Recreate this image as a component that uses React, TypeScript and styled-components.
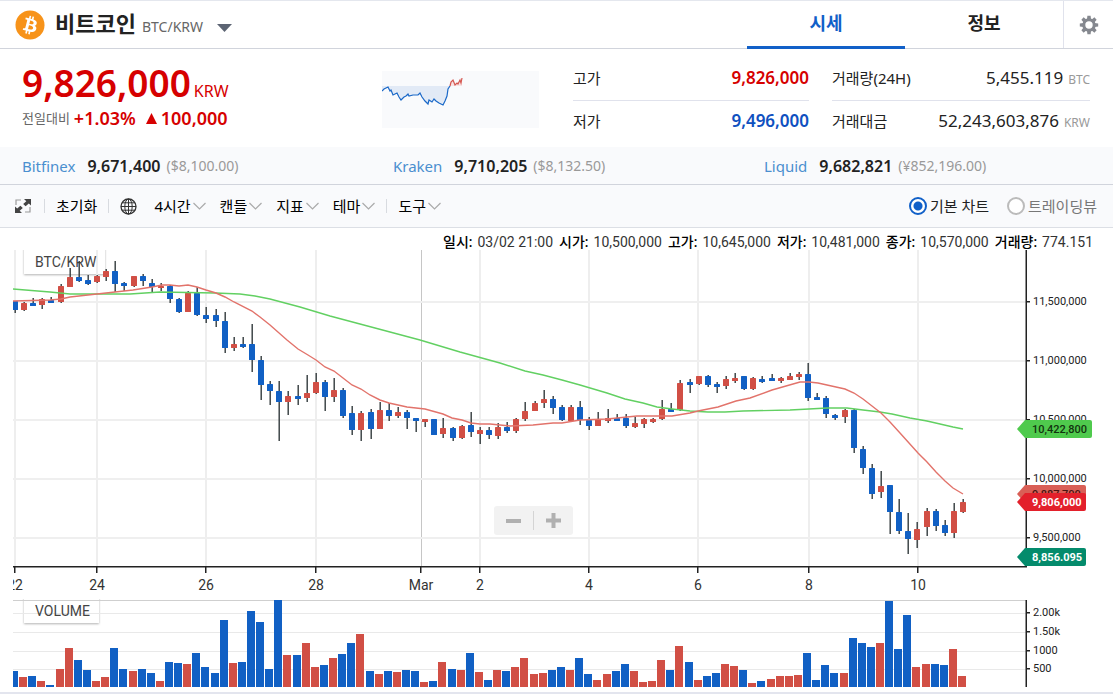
import React, { useState } from 'react';
import styled, { createGlobalStyle } from 'styled-components';

const SANS = `"Noto Sans", "Noto Sans CJK KR", sans-serif`;
const CHART_FONT = `Roboto, "Noto Sans CJK KR", sans-serif`;

const color = {
  blue: '#1160c8',
  up: '#d60000',
  down: '#0f50c0',
  candleUp: '#d14f45',
  candleDown: '#1160c4',
  line: '#d1d4dc',
  soft: '#e0e2ec',
  panel: '#f9fafc',
  text: '#222222',
  muted: '#999999',
};

const GlobalStyle = createGlobalStyle`
  *, *::before, *::after { box-sizing: border-box; }
  body { margin: 0; background: #ffffff; color: ${color.text}; font-family: ${SANS}; }
  button { font: inherit; color: inherit; background: none; border: 0; padding: 0; margin: 0; cursor: pointer; }
  dl, dt, dd, h1, p { margin: 0; }
  svg { display: block; flex: none; }
`;

const Page = styled.div`
  border-top: 1px solid #e4e7ee;
  border-bottom: 2px solid #e3e5ee;
`;

/* ---------- header ---------- */

const Header = styled.header`
  display: flex;
  height: 48px;
  border-bottom: 1px solid ${color.line};
`;

const CoinPicker = styled.div`
  flex: 1;
  display: flex;
  align-items: center;
  padding-left: 15px;
`;

const CoinName = styled.h1`
  margin-left: 10px;
  font-size: 22px;
  line-height: 32px;
  font-weight: 700;
  white-space: nowrap;
  display: flex;
  align-items: baseline;
  gap: 6px;
`;

const PairCode = styled.span`
  font-size: 14px;
  font-weight: 400;
  color: #666666;
`;

const PickerButton = styled.button`
  margin: 6px 0 0 14px;
`;

const Tab = styled.button<{ $active?: boolean }>`
  width: 158px;
  height: 48px;
  padding-bottom: 1px;
  font-size: 18px;
  line-height: 27px;
  font-weight: 700;
  color: ${(p) => (p.$active ? color.blue : color.text)};
  border-bottom: 3px solid ${(p) => (p.$active ? color.blue : 'transparent')};
`;

const Tabs = styled.nav`
  display: flex;
`;

const SettingsButton = styled.button`
  width: 50px;
  display: flex;
  align-items: center;
  justify-content: center;
  border-left: 1px solid ${color.soft};
`;

/* ---------- summary ---------- */

const Summary = styled.section`
  display: flex;
  height: 98px;
  padding: 0 23px 0 22px;
`;

const PriceBlock = styled.div`
  flex: 1;
  padding-top: 12px;
  white-space: nowrap;
`;

const Price = styled.p`
  display: flex;
  align-items: baseline;
  height: 44px;
  font-size: 37px;
  line-height: 44px;
  font-weight: 600;
  color: ${color.up};
`;

const PriceUnit = styled.span`
  margin-left: 3px;
  font-size: 16px;
  line-height: 24px;
  font-weight: 400;
`;

const Change = styled.p`
  display: flex;
  align-items: center;
  font-size: 18px;
  line-height: 26px;
  font-weight: 600;
  color: ${color.up};
`;

const ChangeLabel = styled.span`
  margin-right: 4px;
  font-size: 13px;
  font-weight: 400;
  color: #666666;
`;

const ChangeAmount = styled.span`
  display: flex;
  align-items: center;
  gap: 4px;
  margin-left: 10px;
`;

const SparkBox = styled.div`
  width: 157px;
  height: 57px;
  margin-top: 22px;
  background: ${color.panel};
`;

const StatList = styled.dl<{ $width: number; $gap: number }>`
  width: ${(p) => p.$width}px;
  margin-left: ${(p) => p.$gap}px;
  padding-top: 9px;
`;

const StatRow = styled.div`
  display: flex;
  align-items: center;
  justify-content: space-between;
  height: 42px;
  padding-bottom: 2px;
  white-space: nowrap;

  & + & { border-top: 1px solid ${color.soft}; }
`;

const StatLabel = styled.dt`
  font-size: 15px;
  line-height: 22px;
`;

const StatValue = styled.dd<{ $tone?: string }>`
  font-size: 17px;
  line-height: 22px;
  font-weight: ${(p) => (p.$tone ? 600 : 400)};
  color: ${(p) => p.$tone ?? color.text};
`;

const StatUnit = styled.span`
  margin-left: 5px;
  font-size: 12px;
  line-height: 12px;
  color: ${color.muted};
`;

/* ---------- other exchanges ---------- */

const Exchanges = styled.section`
  display: grid;
  grid-template-columns: repeat(3, 1fr);
  height: 38px;
  background: ${color.panel};
  border-bottom: 1px solid ${color.line};
`;

const Exchange = styled.div`
  display: flex;
  align-items: center;
  padding-left: 22px;
  white-space: nowrap;
  font-size: 15px;
  line-height: 22px;
`;

const ExchangeName = styled.a`
  color: #4a8fcf;
  text-decoration: none;
`;

const ExchangePrice = styled.strong`
  margin-left: 12px;
  font-size: 16px;
  font-weight: 600;
`;

const ExchangeLocal = styled.span`
  margin-left: 6px;
  font-size: 14px;
  color: ${color.muted};
`;

/* ---------- chart toolbar ---------- */

const Toolbar = styled.div`
  display: flex;
  align-items: center;
  height: 43px;
  padding: 0 16px 0 15px;
  background: ${color.panel};
  border-bottom: 1px solid #dcdfe5;
  font-size: 15px;
  line-height: 22px;
  color: #000000;
`;

const ToolGroup = styled.div`
  display: flex;
  align-items: center;
  gap: 12px;
  padding-right: 11px;

  &:first-child { padding-right: 13px; }
  & + & { padding-left: 12px; position: relative; }
  & + &::before {
    content: '';
    position: absolute;
    left: 0;
    top: 4px;
    bottom: 4px;
    width: 1px;
    background: #d8dbe0;
  }
`;

const ToolButton = styled.button`
  display: flex;
  align-items: center;
  gap: 2px;
  min-height: 22px;
  white-space: nowrap;
`;

const MenuRow = styled.div`
  display: flex;
  gap: 14px;
  margin-left: 5px;
`;

const ChartChoice = styled.fieldset`
  display: flex;
  gap: 18px;
  margin: 0 0 0 auto;
  padding: 0;
  border: 0;
`;

const ChoiceLabel = styled.label<{ $on: boolean }>`
  display: flex;
  align-items: center;
  gap: 3px;
  white-space: nowrap;
  color: ${(p) => (p.$on ? color.text : '#777777')};
`;

const Radio = styled.input`
  appearance: none;
  width: 18px;
  height: 18px;
  margin: 0;
  border: 2px solid #bbbbbb;
  border-radius: 50%;
  background: #ffffff;

  &:checked {
    border-color: ${color.blue};
    background: radial-gradient(circle, ${color.blue} 0 4px, #ffffff 5px);
  }
`;

/* ---------- chart ---------- */

const Readout = styled.dl`
  display: flex;
  justify-content: flex-end;
  gap: 6px;
  height: 22px;
  padding: 4px 20px 0 0;
  font-family: ${CHART_FONT};
  font-size: 14px;
  line-height: 20px;
  white-space: nowrap;
`;

const ReadoutItem = styled.div`
  display: flex;
  gap: 5px;
  dt { font-weight: 500; color: #000000; }
  dd { color: #333333; }
`;

const ChartArea = styled.div`
  position: relative;
  svg.plot { width: 100%; height: auto; font-family: ${CHART_FONT}; }
`;

const ZoomControl = styled.div`
  position: absolute;
  left: 494px;
  top: 256px;
  display: flex;
  align-items: center;
  width: 79px;
  height: 29px;
  background: #f2f2f2;
  border-radius: 3px;
`;

const ZoomButton = styled.button`
  flex: 1;
  height: 19px;
  display: flex;
  align-items: center;
  justify-content: center;
  & + & { border-left: 1px solid #d4d4d4; }
`;

/* [direction, high, body top, body bottom, low, volume] in plot units */
type Candle = ['U' | 'D', number, number, number, number, number];

const candles: Candle[] = [
  ['D', 301, 301, 310, 313, 16], ['U', 302, 303, 310, 311, 10], ['D', 298, 303, 306, 306, 11], ['U', 298, 299, 305, 309, 6],
  ['D', 297, 300, 303, 303, 2], ['U', 284, 286, 302, 303, 18], ['U', 268, 277, 287, 287, 39], ['D', 261, 277, 281, 282, 27],
  ['D', 275, 280, 284, 285, 17], ['U', 275, 276, 282, 283, 6], ['U', 269, 271, 277, 281, 10], ['D', 261, 271, 284, 292, 39],
  ['D', 282, 283, 286, 291, 18], ['U', 276, 276, 286, 287, 16], ['D', 274, 276, 281, 286, 18], ['D', 279, 283, 287, 293, 14],
  ['U', 283, 286, 288, 291, 6], ['D', 285, 286, 299, 303, 25], ['D', 298, 299, 312, 313, 24], ['U', 291, 293, 312, 312, 23],
  ['D', 287, 293, 315, 316, 34], ['D', 307, 315, 319, 323, 20], ['D', 309, 315, 321, 327, 14], ['D', 312, 321, 348, 353, 67],
  ['U', 337, 344, 348, 351, 24], ['D', 337, 344, 347, 348, 25], ['D', 324, 344, 360, 372, 76], ['D', 356, 360, 385, 400, 65],
  ['D', 381, 384, 391, 405, 18], ['D', 381, 391, 402, 441, 87], ['U', 391, 396, 402, 415, 32], ['D', 385, 396, 399, 405, 32],
  ['U', 375, 393, 398, 402, 44], ['U', 373, 382, 393, 394, 20], ['D', 380, 382, 397, 411, 22], ['U', 378, 390, 397, 402, 29],
  ['D', 388, 390, 416, 418, 33], ['D', 406, 413, 430, 435, 44], ['U', 411, 413, 430, 441, 53], ['D', 409, 412, 429, 439, 16],
  ['U', 402, 410, 429, 429, 13], ['D', 403, 410, 416, 421, 16], ['U', 407, 412, 416, 418, 15], ['D', 410, 412, 418, 429, 17],
  ['D', 418, 418, 421, 432, 16], ['U', 419, 419, 422, 427, 5], ['D', 419, 419, 435, 435, 6], ['U', 418, 428, 434, 438, 25],
  ['D', 427, 428, 438, 441, 18], ['U', 425, 426, 438, 439, 17], ['D', 412, 425, 432, 437, 34], ['U', 427, 430, 434, 444, 15],
  ['D', 427, 430, 435, 439, 7], ['U', 423, 427, 436, 439, 17], ['D', 422, 427, 431, 433, 16], ['U', 418, 419, 431, 433, 20],
  ['U', 402, 411, 419, 421, 29], ['U', 401, 403, 411, 411, 13], ['U', 390, 399, 403, 408, 14], ['D', 396, 399, 408, 414, 17],
  ['D', 405, 407, 420, 421, 20], ['U', 405, 407, 421, 421, 17], ['D', 401, 407, 420, 425, 29], ['D', 417, 420, 426, 430, 13],
  ['U', 412, 419, 426, 426, 7], ['U', 409, 418, 421, 423, 13], ['D', 414, 418, 421, 421, 16], ['D', 414, 418, 426, 428, 23],
  ['U', 417, 423, 427, 428, 16], ['U', 418, 419, 424, 428, 5], ['U', 418, 419, 422, 423, 6], ['U', 400, 409, 419, 420, 27],
  ['D', 403, 409, 412, 412, 17], ['U', 380, 383, 410, 411, 41], ['D', 379, 382, 385, 393, 25], ['U', 376, 376, 384, 385, 7],
  ['D', 375, 376, 385, 387, 11], ['D', 382, 384, 387, 393, 14], ['U', 376, 379, 386, 389, 23], ['U', 373, 378, 381, 383, 21],
  ['D', 376, 376, 389, 390, 17], ['U', 377, 378, 389, 390, 4], ['D', 376, 379, 382, 383, 6], ['D', 374, 378, 381, 381, 8],
  ['U', 377, 378, 381, 383, 11], ['U', 373, 376, 380, 380, 11], ['U', 372, 374, 377, 380, 12], ['D', 363, 374, 398, 401, 34],
  ['D', 393, 397, 400, 400, 7], ['D', 396, 398, 414, 418, 22], ['D', 414, 415, 418, 420, 14], ['U', 409, 410, 417, 423, 14],
  ['D', 409, 410, 448, 453, 49], ['D', 446, 449, 468, 474, 44], ['D', 464, 468, 494, 499, 40], ['U', 471, 486, 492, 498, 44],
  ['D', 485, 485, 512, 534, 86], ['D', 499, 512, 531, 534, 38], ['D', 513, 531, 539, 554, 72], ['U', 522, 529, 540, 548, 20],
  ['U', 508, 511, 527, 536, 23], ['D', 509, 511, 526, 531, 23], ['D', 520, 525, 533, 536, 22], ['U', 503, 511, 533, 538, 38],
  ['U', 499, 502, 512, 513, 11],
];

/* the volume of candle 83 is coloured against its candle */
const volumeIsDown = (c: Candle, i: number) => (i === 83 ? false : c[0] === 'D');

const shortAverage =
  '13,301 50,300 61,299 70,297 97,294 115,292 124,291 133,290 152,287 162,285 170,285 179,286 188,285 197,287 206,290 216,293 225,297 234,302 252,311 260,317 270,325 287,340 298,349 308,355 316,360 325,367 334,371 343,378 352,385 361,389 370,395 380,400 389,403 407,407 425,409 443,414 452,418 462,420 471,423 480,424 490,424 510,426 533,425 553,423 562,423 580,420 607,419 637,416 672,416 690,413 698,411 708,409 718,407 736,401 750,398 772,390 800,382 809,382 818,383 827,385 836,387 845,389 854,393 863,399 872,406 881,413 890,422 900,433 909,443 918,453 927,462 936,472 945,481 953,488 963,494';

const longAverage =
  '13,289 50,292 70,294 100,294 130,294 160,292 215,293 240,294 255,296 270,299 300,307 330,316 360,324 390,332 420,340 460,352 500,363 525,371 543,375 562,380 580,385 607,393 625,399 643,403 657,407 672,409 690,411 708,412 725,412 743,411 790,410 809,409 827,408 847,408 863,410 880,412 892,414 910,418 927,421 940,424 953,427 963,429';

const days = [
  { x: 15, label: '22' }, { x: 97, label: '24' }, { x: 206, label: '26' }, { x: 316, label: '28' },
  { x: 421, label: 'Mar', month: true }, { x: 480, label: '2' }, { x: 589, label: '4' },
  { x: 698, label: '6' }, { x: 809, label: '8' }, { x: 918, label: '10' },
];

const prices = [
  { y: 302, label: '11,500,000' }, { y: 361, label: '11,000,000' }, { y: 420, label: '10,500,000' },
  { y: 479, label: '10,000,000' }, { y: 538, label: '9,500,000' },
];

const volumes = [
  { y: 613, label: '2.00k' }, { y: 632, label: '1.50k' }, { y: 651, label: '1000' }, { y: 669, label: '500' },
];

const tags = [
  { y: 429, right: 1092, fill: '#4fca4d', ink: '#12330f', label: '10,422,800', weight: 500 },
  { y: 494, right: 1086, fill: '#d95f56', ink: '#4a1210', label: '9,887,700', weight: 500 },
  { y: 502, right: 1086, fill: '#e3202b', ink: '#ffffff', label: '9,806,000', weight: 700 },
  { y: 557, right: 1086, fill: '#048b6c', ink: '#ffffff', label: '8,856.095', weight: 700 },
];

const candleX = (i: number) => Math.round(15 + (i * 948) / 104);

function CandleChart() {
  return (
    <svg className="plot" viewBox="0 250 1113 442" role="img" aria-label="BTC/KRW">
      <defs>
        <clipPath id="plotClip"><rect x="13" y="250" width="1100" height="442" /></clipPath>
        <filter id="legendShadow" x="-10%" y="-20%" width="120%" height="150%">
          <feDropShadow dx="0" dy="1" stdDeviation="1" floodOpacity="0.3" />
        </filter>
      </defs>
      <g clipPath="url(#plotClip)">
        <rect x="24" y="240" width="81" height="34" fill="#ffffff" filter="url(#legendShadow)" />
        <rect x="24" y="590" width="75" height="33" fill="#ffffff" filter="url(#legendShadow)" />
        <rect x="13" y="575" width="200" height="24" fill="#ffffff" />

        {days.map((d) => (
          <rect key={d.x} x={d.month ? d.x : d.x - 1} y="250" width={d.month ? 1 : 2} height="316" fill={d.month ? '#c6c6c6' : '#eeeeee'} />
        ))}
        {prices.map((p) => <rect key={p.y} x="13" y={p.y - 1} width="1013" height="2" fill="#efefef" />)}
        {volumes.map((v) => <rect key={v.y} x="13" y={v.y} width="1013" height="1" fill="#e9e9e9" />)}
        <rect x="13" y="600" width="1013" height="1" fill="#cfcfcf" />

        <text x="35" y="267" fontSize="14" fill="#444444">BTC/KRW</text>
        <text x="35" y="616" fontSize="14" fill="#444444">VOLUME</text>

        {candles.map((c, i) => {
          const x = candleX(i);
          return (
            <g key={i}>
              <rect x={x - 0.5} y={c[1]} width="1.4" height={c[4] - c[1]} fill="#333b3d" />
              <rect x={x - 3} y={c[2]} width="6" height={c[3] - c[2]} rx="0.5" fill={c[0] === 'U' ? color.candleUp : color.candleDown} />
              <rect x={x - 5} y={687 - c[5]} width="8" height={c[5]} fill={volumeIsDown(c, i) ? color.candleDown : color.candleUp} />
            </g>
          );
        })}
        <polyline points={longAverage} fill="none" stroke="#62d062" strokeWidth="1.4" />
        <polyline points={shortAverage} fill="none" stroke="#e2736b" strokeWidth="1.4" />

        <rect x="13" y="566" width="1014" height="1.5" fill="#222222" />
        <rect x="1025.5" y="250" width="1.5" height="317" fill="#222222" />
        <rect x="1025.5" y="600" width="1.5" height="87" fill="#222222" />
        {days.map((d) => (
          <g key={d.x}>
            <rect x={d.x - 1} y="566" width="1.5" height="7" fill="#222222" />
            <text x={d.x} y="590" fontSize="14" fill="#333333" textAnchor="middle">{d.label}</text>
          </g>
        ))}
        {[...prices, ...volumes].map((p) => (
          <g key={p.y}>
            <rect x="1026" y={p.y - 1} width="4" height="1.5" fill="#222222" />
            <text x="1033" y={p.y + 3} fontSize="11" fill="#222222">{p.label}</text>
          </g>
        ))}
        {tags.map((t) => (
          <g key={t.y}>
            <path
              d={`M1017 ${t.y} L1025 ${t.y - 9} H${t.right - 2} Q${t.right} ${t.y - 9} ${t.right} ${t.y - 7} V${t.y + 7} Q${t.right} ${t.y + 9} ${t.right - 2} ${t.y + 9} H1025 Z`}
              fill={t.fill}
            />
            <text x="1032" y={t.y + 4} fontSize="11" fontWeight={t.weight} fill={t.ink}>{t.label}</text>
          </g>
        ))}
      </g>
    </svg>
  );
}

function BitcoinIcon() {
  return (
    <svg width="30" height="30" viewBox="0 0 32 32" aria-hidden="true">
      <circle cx="16" cy="16" r="15.5" fill="#f7931a" />
      <path
        fill="#ffffff"
        d="M23.2 14c.3-2.1-1.3-3.200-3.500-4l.7-2.800-1.700-.4-.7 2.700-1.400-.3.700-2.700-1.700-.4-.7 2.800-1.100-.3-2.300-.6-.5 1.800s1.300.3 1.200.3c.7.2.8.6.8 1l-2 7.900c-.1.200-.3.500-.8.400 0 0-1.200-.3-1.200-.3l-.8 2 2.200.5 1.200.3-.7 2.900 1.700.4.700-2.800 1.400.4-.7 2.800 1.700.4.7-2.900c3 .6 5.200.3 6.100-2.300.8-2.100 0-3.300-1.500-4.100 1.100-.3 1.900-1 2.200-2.700zm-3.900 5.500c-.5 2.200-4.200 1-5.400.7l1-3.900c1.200.3 5 .9 4.400 3.200zm.5-5.500c-.5 2-3.600 1-4.500.7l.9-3.500c1 .2 4.200.7 3.600 2.800z"
      />
    </svg>
  );
}

function GearIcon() {
  return (
    <svg width="20" height="20" viewBox="0 0 20 20" aria-hidden="true" fill="none" stroke="#85888f">
      <circle cx="10" cy="10" r="5.200" strokeWidth="3" />
      {[0, 45, 90, 135, 180, 225, 270, 315].map((a) => (
        <path key={a} d="M7.900 4.500 L8.400 0.800 H11.600 L12.100 4.500 Z" fill="#85888f" stroke="none" transform={`rotate(${a} 10 10)`} />
      ))}
    </svg>
  );
}

function ExpandIcon() {
  return (
    <svg width="16" height="14" viewBox="0 0 16 14" aria-hidden="true">
      <path d="M1 6V1H6 M15 8V13H10" fill="none" stroke="#9a9a9a" strokeWidth="1.200" />
      <path d="M9 0H16V6.500L13.800 4.600L10.600 7.200L8.200 5L11.300 2.200Z M7 14H0V7.500L2.200 9.400L5.400 6.800L7.800 9L4.700 11.800Z" fill="#444444" />
    </svg>
  );
}

function GlobeIcon() {
  return (
    <svg width="17" height="17" viewBox="0 0 17 17" aria-hidden="true" fill="none" stroke="#333333" strokeWidth="1">
      <circle cx="8.500" cy="8.500" r="7.500" strokeWidth="1.300" />
      <ellipse cx="8.500" cy="8.500" rx="3.700" ry="7.500" />
      <path d="M8.500 1V16 M1 8.500H16 M2.200 4.800H14.800 M2.200 12.200H14.800" />
    </svg>
  );
}

function Chevron() {
  return (
    <svg width="13" height="8" viewBox="0 0 13 8" aria-hidden="true">
      <path d="M0.500 1L6.500 7L12.500 1" fill="none" stroke="#aaaaaa" strokeWidth="1.200" />
    </svg>
  );
}

function Sparkline() {
  const fall =
    '0,20 2,18 4,17 6,16 8,20 9,19 11,24 15,22 17,26 19,29 22,26 24,25 26,23 27,25 31,24 36,24 38,22 40,26 43,30 46,33 47,29 50,31 52,28 54,30 57,32 61,34 63,30 65,25 66,18 68,15';
  const rise = '68,15 69,11 71,9 73,14 75,12 76,13 78,9 79,12 80,7';
  return (
    <svg width="157" height="57" viewBox="0 0 157 57" aria-hidden="true">
      <polygon points={`0,15 ${fall}`} fill="#e2eaf6" />
      <polygon points={`${rise} 80,15`} fill="#f8e2e3" />
      <polyline points={fall} fill="none" stroke="#1a68c8" strokeWidth="1.200" />
      <polyline points={rise} fill="none" stroke="#d5564f" strokeWidth="1.200" />
    </svg>
  );
}

const exchanges = [
  { name: 'Bitfinex', price: '9,671,400', local: '($8,100.00)' },
  { name: 'Kraken', price: '9,710,205', local: '($8,132.50)' },
  { name: 'Liquid', price: '9,682,821', local: '(¥852,196.00)' },
];

const readout = [
  ['일시:', '03/02 21:00'], ['시가:', '10,500,000'], ['고가:', '10,645,000'],
  ['저가:', '10,481,000'], ['종가:', '10,570,000'], ['거래량:', '774.151'],
];

export default function App() {
  const [tab, setTab] = useState('시세');
  const [view, setView] = useState('기본 차트');

  return (
    <Page>
      <GlobalStyle />
      <Header>
        <CoinPicker>
          <BitcoinIcon />
          <CoinName>비트코인 <PairCode>BTC/KRW</PairCode></CoinName>
          <PickerButton aria-label="코인 선택">
            <svg width="15" height="8" viewBox="0 0 15 8" aria-hidden="true"><path d="M0 0H15L7.500 8Z" fill="#5c6473" /></svg>
          </PickerButton>
        </CoinPicker>
        <Tabs>
          {['시세', '정보'].map((t) => (
            <Tab key={t} $active={t === tab} onClick={() => setTab(t)}>{t}</Tab>
          ))}
        </Tabs>
        <SettingsButton aria-label="설정"><GearIcon /></SettingsButton>
      </Header>

      <Summary>
        <PriceBlock>
          <Price>9,826,000<PriceUnit>KRW</PriceUnit></Price>
          <Change>
            <ChangeLabel>전일대비</ChangeLabel>
            +1.03%
            <ChangeAmount>
              <svg width="11" height="11" viewBox="0 0 11 11" aria-hidden="true"><path d="M5.500 0L11 11H0Z" fill={color.up} /></svg>
              100,000
            </ChangeAmount>
          </Change>
        </PriceBlock>
        <SparkBox><Sparkline /></SparkBox>
        <StatList $width={236} $gap={34}>
          <StatRow><StatLabel>고가</StatLabel><StatValue $tone={color.up}>9,826,000</StatValue></StatRow>
          <StatRow><StatLabel>저가</StatLabel><StatValue $tone={color.down}>9,496,000</StatValue></StatRow>
        </StatList>
        <StatList $width={258} $gap={23}>
          <StatRow><StatLabel>거래량(24H)</StatLabel><StatValue>5,455.119<StatUnit>BTC</StatUnit></StatValue></StatRow>
          <StatRow><StatLabel>거래대금</StatLabel><StatValue>52,243,603,876<StatUnit>KRW</StatUnit></StatValue></StatRow>
        </StatList>
      </Summary>

      <Exchanges>
        {exchanges.map((e) => (
          <Exchange key={e.name}>
            <ExchangeName href="#">{e.name}</ExchangeName>
            <ExchangePrice>{e.price}</ExchangePrice>
            <ExchangeLocal>{e.local}</ExchangeLocal>
          </Exchange>
        ))}
      </Exchanges>

      <Toolbar>
        <ToolGroup><ToolButton aria-label="전체 화면"><ExpandIcon /></ToolButton></ToolGroup>
        <ToolGroup><ToolButton>초기화</ToolButton></ToolGroup>
        <ToolGroup>
          <ToolButton aria-label="시간대"><GlobeIcon /></ToolButton>
          <MenuRow>
            {['4시간', '캔들', '지표', '테마'].map((m) => (
              <ToolButton key={m} aria-haspopup="menu">{m}<Chevron /></ToolButton>
            ))}
          </MenuRow>
        </ToolGroup>
        <ToolGroup><ToolButton aria-haspopup="menu">도구<Chevron /></ToolButton></ToolGroup>
        <ChartChoice aria-label="차트 종류">
          {['기본 차트', '트레이딩뷰'].map((v) => (
            <ChoiceLabel key={v} $on={v === view}>
              <Radio type="radio" name="view" checked={v === view} onChange={() => setView(v)} />
              {v}
            </ChoiceLabel>
          ))}
        </ChartChoice>
      </Toolbar>

      <Readout>
        {readout.map(([label, value]) => (
          <ReadoutItem key={label}><dt>{label}</dt><dd>{value}</dd></ReadoutItem>
        ))}
      </Readout>
      <ChartArea>
        <CandleChart />
        <ZoomControl>
          <ZoomButton aria-label="축소">
            <svg width="15" height="4" viewBox="0 0 15 4" aria-hidden="true"><rect width="15" height="4" fill="#b0b0b0" /></svg>
          </ZoomButton>
          <ZoomButton aria-label="확대">
            <svg width="15" height="15" viewBox="0 0 15 15" aria-hidden="true"><path d="M0 5.500H5.500V0H9.500V5.500H15V9.500H9.500V15H5.500V9.500H0Z" fill="#b0b0b0" /></svg>
          </ZoomButton>
        </ZoomControl>
      </ChartArea>
    </Page>
  );
}
